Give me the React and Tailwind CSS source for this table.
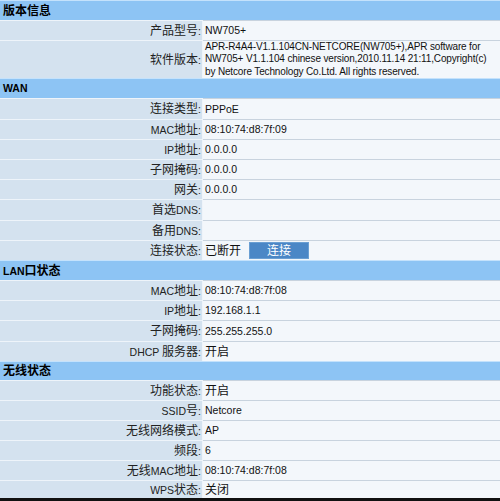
import React from "react";

// split mixed text so CJK runs render at 12px and latin runs at the smaller size
function T({ s }) {
  const parts = s.split(/([\u3000-\u9fff]+)/);
  return (
    <span className="whitespace-pre">
      {parts.map((p, i) =>
        /[\u3000-\u9fff]/.test(p) ? (
          <span key={i} className="text-[12px]">
            {p}
          </span>
        ) : (
          p
        )
      )}
    </span>
  );
}

function Header({ title, h = "h-[20px]" }) {
  return (
    <div
      className={`${h} flex items-center bg-[#8dc4f4] border-t border-[#c4e2fc] pl-[3px] font-bold text-black`}
    >
      <T s={title} />
    </div>
  );
}

function Row({ label, children, h = "h-[20px]" }) {
  return (
    <div className={`${h} flex`}>
      <div className="w-[202px] shrink-0 flex items-center justify-end bg-[#d4e2ef] border-t border-[#eef4fa] pr-px text-[#222]">
        <T s={label + ":"} />
      </div>
      <div className="w-px shrink-0 bg-[#eef4fa]" />
      <div className="flex-1 min-w-0 flex items-center bg-[#f3f7fb] border-t border-[#c8d3de] pl-[2px] text-[#111] whitespace-nowrap">
        {children}
      </div>
    </div>
  );
}

export default function App() {
  return (
    <div
      className="w-[500px] h-[501px] overflow-hidden bg-white text-[10.5px] leading-none"
      style={{ fontFamily: '"Liberation Sans", "Noto Sans CJK SC", sans-serif' }}
    >
      <Header title="版本信息" />
      <Row label="产品型号">
        <T s="NW705+" />
      </Row>
      <Row label="软件版本" h="h-[38px]">
        <div className="leading-[12.5px] text-[10px] tracking-[-0.15px]">
          APR-R4A4-V1.1.104CN-NETCORE(NW705+),APR software for
          <br />
          NW705+ V1.1.104 chinese version,2010.11.14 21:11,Copyright(c)
          <br />
          by Netcore Technology Co.Ltd. All rights reserved.
        </div>
      </Row>

      <Header title="WAN" />
      <Row label="连接类型" h="h-[21px]">PPPoE</Row>
      <Row label="MAC地址">08:10:74:d8:7f:09</Row>
      <Row label="IP地址">0.0.0.0</Row>
      <Row label="子网掩码">0.0.0.0</Row>
      <Row label="网关">0.0.0.0</Row>
      <Row label="首选DNS" h="h-[21px]" />
      <Row label="备用DNS" />
      <Row label="连接状态">
        <T s="已断开" />
        <button className="ml-[8px] w-[60px] h-[17px] bg-[#4b87c6] border border-[#6a9fd3] text-white flex items-center justify-center">
          <T s="连接" />
        </button>
      </Row>

      <Header title="LAN口状态" />
      <Row label="MAC地址">08:10:74:d8:7f:08</Row>
      <Row label="IP地址">192.168.1.1</Row>
      <Row label="子网掩码" h="h-[21px]">255.255.255.0</Row>
      <Row label="DHCP 服务器">
        <T s="开启" />
      </Row>

      <Header title="无线状态" h="h-[19px]" />
      <Row label="功能状态">
        <T s="开启" />
      </Row>
      <Row label="SSID号">Netcore</Row>
      <Row label="无线网络模式">AP</Row>
      <Row label="频段">6</Row>
      <Row label="无线MAC地址">08:10:74:d8:7f:08</Row>
      <Row label="WPS状态" h="h-[18px]">
        <T s="关闭" />
      </Row>
      <div className="h-[3px] bg-[#111]" />
    </div>
  );
}
